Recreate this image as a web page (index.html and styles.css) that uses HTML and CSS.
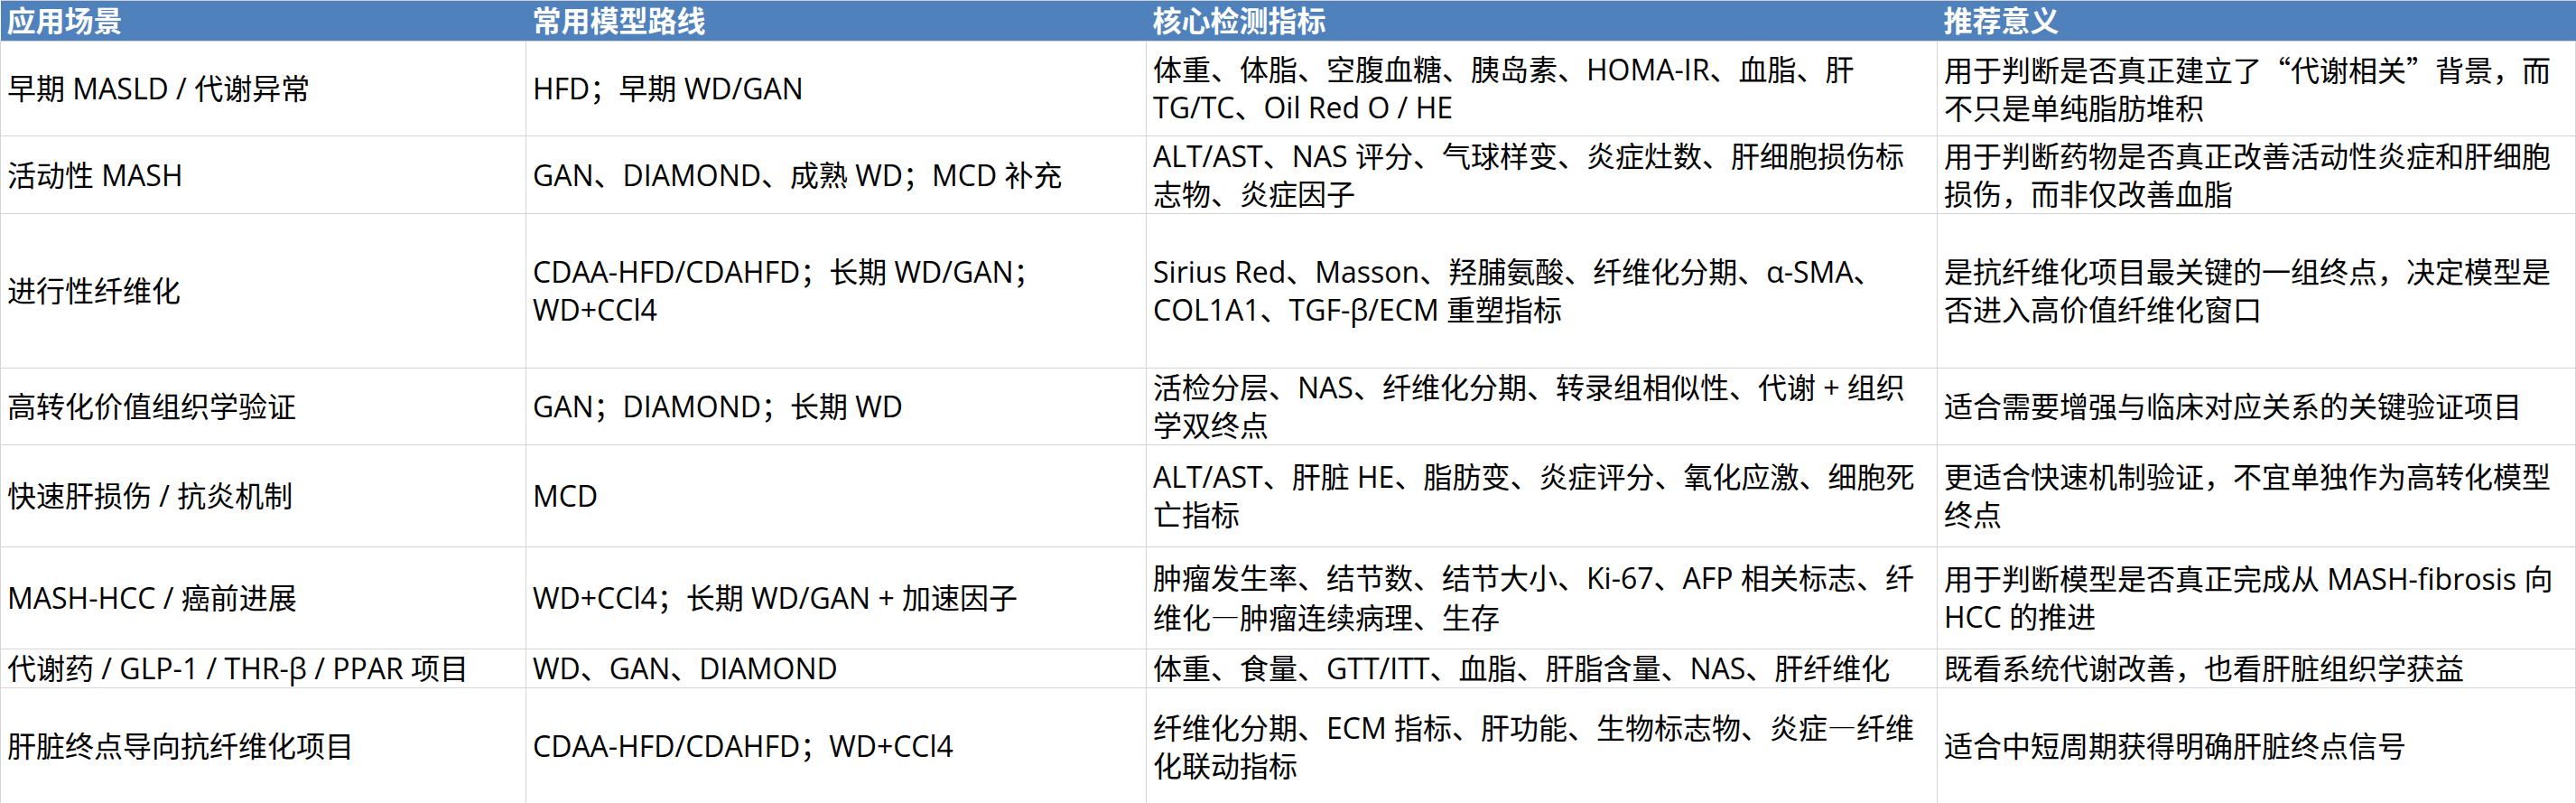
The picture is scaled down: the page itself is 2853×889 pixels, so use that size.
FILE: index.html
```html
<!DOCTYPE html>
<html lang="zh-CN">
<head>
<meta charset="utf-8">
<title>MASH 模型选择</title>
<link rel="stylesheet" href="styles.css">
</head>
<body>
<table class="sheet">
  <colgroup>
    <col class="c1"><col class="c2"><col class="c3"><col class="c4">
  </colgroup>
  <thead>
    <tr class="head">
      <th>应用场景</th><th>常用模型路线</th><th>核心检测指标</th><th>推荐意义</th>
    </tr>
  </thead>
  <tbody>
    <tr class="r1">
      <td>早期 MASLD / 代谢异常</td>
      <td>HFD；早期 WD/GAN</td>
      <td>体重、体脂、空腹血糖、胰岛素、HOMA-IR、血脂、肝<br>TG/TC、Oil Red O / HE</td>
      <td>用于判断是否真正建立了<span class="cjk">“</span>代谢相关<span class="cjk">”</span>背景，而<br>不只是单纯脂肪堆积</td>
    </tr>
    <tr class="r2">
      <td>活动性 MASH</td>
      <td>GAN、DIAMOND、成熟 WD；MCD 补充</td>
      <td>ALT/AST、NAS 评分、气球样变、炎症灶数、肝细胞损伤标<br>志物、炎症因子</td>
      <td>用于判断药物是否真正改善活动性炎症和肝细胞<br>损伤，而非仅改善血脂</td>
    </tr>
    <tr class="r3">
      <td>进行性纤维化</td>
      <td>CDAA-HFD/CDAHFD；长期 WD/GAN；<br>WD+CCl4</td>
      <td>Sirius Red、Masson、羟脯氨酸、纤维化分期、α-SMA、<br>COL1A1、TGF-β/ECM 重塑指标</td>
      <td>是抗纤维化项目最关键的一组终点，决定模型是<br>否进入高价值纤维化窗口</td>
    </tr>
    <tr class="r4">
      <td>高转化价值组织学验证</td>
      <td>GAN；DIAMOND；长期 WD</td>
      <td>活检分层、NAS、纤维化分期、转录组相似性、代谢 + 组织<br>学双终点</td>
      <td>适合需要增强与临床对应关系的关键验证项目</td>
    </tr>
    <tr class="r5">
      <td>快速肝损伤 / 抗炎机制</td>
      <td>MCD</td>
      <td>ALT/AST、肝脏 HE、脂肪变、炎症评分、氧化应激、细胞死<br>亡指标</td>
      <td>更适合快速机制验证，不宜单独作为高转化模型<br>终点</td>
    </tr>
    <tr class="r6">
      <td>MASH-HCC / 癌前进展</td>
      <td>WD+CCl4；长期 WD/GAN + 加速因子</td>
      <td>肿瘤发生率、结节数、结节大小、Ki-67、AFP 相关标志、纤<br>维化<span class="cjk">—</span>肿瘤连续病理、生存</td>
      <td>用于判断模型是否真正完成从 MASH-fibrosis 向<br>HCC 的推进</td>
    </tr>
    <tr class="r7">
      <td>代谢药 / GLP-1 / THR-β / PPAR 项目</td>
      <td>WD、GAN、DIAMOND</td>
      <td>体重、食量、GTT/ITT、血脂、肝脂含量、NAS、肝纤维化</td>
      <td>既看系统代谢改善，也看肝脏组织学获益</td>
    </tr>
    <tr class="r8">
      <td>肝脏终点导向抗纤维化项目</td>
      <td>CDAA-HFD/CDAHFD；WD+CCl4</td>
      <td>纤维化分期、ECM 指标、肝功能、生物标志物、炎症<span class="cjk">—</span>纤维<br>化联动指标</td>
      <td>适合中短周期获得明确肝脏终点信号</td>
    </tr>
  </tbody>
</table>
</body>
</html>
```
FILE: styles.css
```css
html, body {
  margin: 0;
  padding: 0;
  background: #ffffff;
}

.sheet {
  border-collapse: collapse;
  table-layout: fixed;
  width: 2852px;
  font-family: "Open Sans", "Noto Sans CJK SC", sans-serif;
  font-size: 32px;
  line-height: 42px;
  color: #000000;
  border-top: 1px solid #d0d0d0;
  border-bottom: 1px solid #1a1a1a;
}

.c1 { width: 582px; }
.c2 { width: 687px; }
.c3 { width: 876px; }
.c4 { width: 707px; }

.cjk {
  font-family: "Noto Sans CJK SC", sans-serif;
}

.head th {
  background: #4f81bd;
  color: #ffffff;
  font-weight: 700;
  text-align: left;
  padding: 0 7px;
  height: 44px;
  line-height: 44px;
  vertical-align: middle;
  border: none;
  white-space: nowrap;
}

td {
  border: 1px solid #d4d4d4;
  padding: 0 7px;
  vertical-align: middle;
  white-space: nowrap;
  overflow: hidden;
}

tbody tr:last-child td {
  border-bottom: 1px solid #1a1a1a;
}

.r1 td { height: 104px; }
.r2 td { height: 85px; }
.r3 td { height: 170px; }
.r4 td { height: 77px; }
.r5 td { height: 112px; }
.r6 td { height: 112px; }
.r7 td { height: 40px; }
.r8 td { height: 127px; }
```
